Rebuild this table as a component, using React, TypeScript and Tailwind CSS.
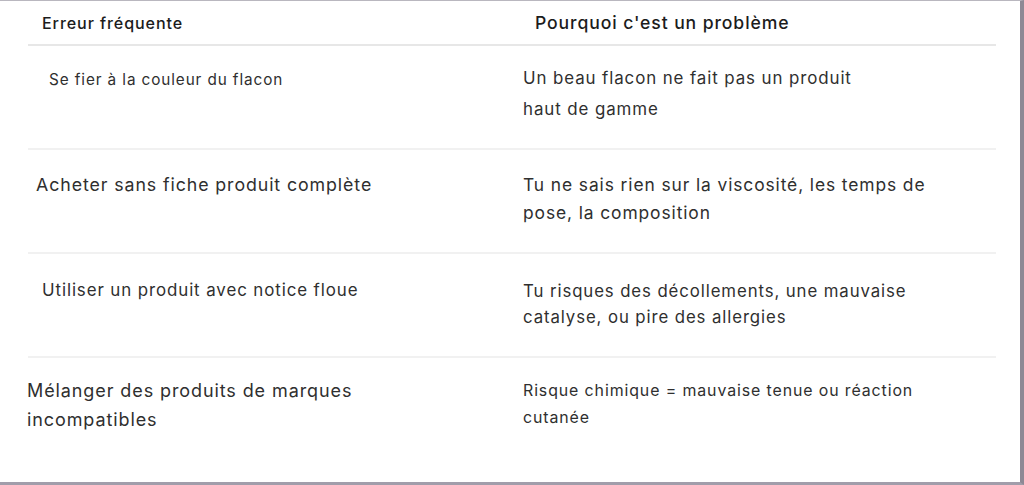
const rows = [
  {
    left: ["Se fier à la couleur du flacon"],
    right: ["Un beau flacon ne fait pas un produit", "haut de gamme"],
    leftCls: "pl-[21px] pt-[18px] text-[15.3px] leading-[31px]",
    rightCls: "pt-[17px] text-[16.9px] leading-[31px]",
    rowCls: "h-[104px] border-b-2 border-[#f1f1f1]",
  },
  {
    left: ["Acheter sans fiche produit complète"],
    right: ["Tu ne sais rien sur la viscosité, les temps de", "pose, la composition"],
    leftCls: "pl-[8px] pt-[21px] text-[17.8px] leading-[28px]",
    rightCls: "pt-[21px] text-[17.4px] leading-[28px]",
    rowCls: "h-[104px] border-b-2 border-[#f1f1f1]",
  },
  {
    left: ["Utiliser un produit avec notice floue"],
    right: ["Tu risques des décollements, une mauvaise", "catalyse, ou pire des allergies"],
    leftCls: "pl-[14px] pt-[23px] text-[16.9px] leading-[26px]",
    rightCls: "pt-[24px] text-[16.8px] leading-[26px]",
    rowCls: "h-[104px] border-b-2 border-[#f1f1f1]",
  },
  {
    left: ["Mélanger des produits de marques", "incompatibles"],
    right: ["Risque chimique = mauvaise tenue ou réaction", "cutanée"],
    leftCls: "-ml-px pt-[18px] text-[18px] leading-[29px]",
    rightCls: "pt-[19px] text-[15.9px] leading-[27px]",
    rowCls: "flex-1",
  },
];

export default function App() {
  return (
    <div
      className="flex h-[485px] w-[1024px] flex-col overflow-hidden border-t border-r-[4px] border-b-[3px] border-t-[#b9b7bf] border-r-[#8e8995] border-b-[#a19daa] bg-white tracking-[0.9px] text-[#2f2f2f]"
      style={{ fontFamily: "Inter, 'Noto Sans', sans-serif" }}
    >
      <div className="ml-[28px] flex w-[968px] flex-1 flex-col">
        <div className="flex h-[45px] border-b-2 border-[#e7e7e7] font-medium text-[#1c1c1c]">
          <div className="w-[480px] pl-[14px] pt-[10px] text-[16.1px] leading-[24px]">Erreur fréquente</div>
          <div className="flex-1 pl-[27px] pt-[10px] text-[17.6px] leading-[24px]">Pourquoi c'est un problème</div>
        </div>
        {rows.map((r) => (
          <div key={r.left[0]} className={`flex ${r.rowCls}`}>
            <div className="w-[495px]">
              <div className={`whitespace-nowrap ${r.leftCls}`}>
                {r.left.map((l) => (
                  <div key={l}>{l}</div>
                ))}
              </div>
            </div>
            <div className="flex-1">
              <div className={`whitespace-nowrap ${r.rightCls}`}>
                {r.right.map((l) => (
                  <div key={l}>{l}</div>
                ))}
              </div>
            </div>
          </div>
        ))}
      </div>
    </div>
  );
}
